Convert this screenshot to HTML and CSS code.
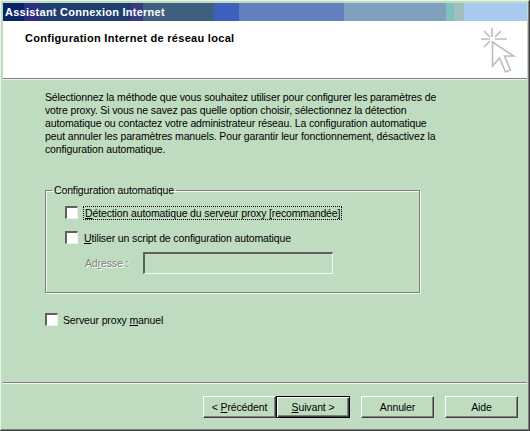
FILE: index.html
```html
<!DOCTYPE html>
<html lang="fr">
  <head>
    <meta charset="UTF-8" />
    <title>Assistant Connexion Internet</title>
    <link rel="stylesheet" href="styles.css">
  </head>
  <body>
    <div class="window">
      <div class="titlebar">Assistant Connexion Internet</div>
      <div class="header">
        <h1>Configuration Internet de réseau local</h1>
        <svg class="wizard-icon" width="36" height="50" viewBox="0 0 36 50">
          <g fill="none" stroke="#bdbdbd" stroke-width="1.6">
            <path d="M11 1v9M0 12h9M14 12h12M3 4l6 6M20 4l-6 6M3 20l6-6" />
            <path d="M11.5 15v24l7-8 6 14 5-2-6-14h9z" fill="#fff" />
          </g>
        </svg>
      </div>
      <div class="content">
        <p class="intro">Sélectionnez la méthode que vous souhaitez utiliser pour configurer les paramètres de votre proxy. Si vous ne savez pas quelle option choisir, sélectionnez la détection automatique ou contactez votre administrateur réseau. La configuration automatique peut annuler les paramètres manuels. Pour garantir leur fonctionnement, désactivez la configuration automatique.</p>

        <fieldset class="group">
          <legend>Configuration automatique</legend>
          <div class="check-row">
            <span class="checkbox"></span>
            <span class="focus-label"><u>D</u>étection automatique du serveur proxy [recommandée]</span>
          </div>
          <div class="check-row">
            <span class="checkbox"></span>
            <span class="plain-label"><u>U</u>tiliser un script de configuration automatique</span>
          </div>
          <div class="address-row">
            <span class="disabled-label">Ad<u>r</u>esse :</span>
            <span class="textbox"></span>
          </div>
        </fieldset>

        <div class="check-row manual-row">
          <span class="checkbox"></span>
          <span class="plain-label">Serveur proxy <u>m</u>anuel</span>
        </div>
      </div>
      <div class="footer">
        <button class="btn">&lt; <u>P</u>récédent</button>
        <button class="btn btn-default"><u>S</u>uivant &gt;</button>
        <button class="btn btn-gap">Annuler</button>
        <button class="btn btn-gap">Aide</button>
      </div>
    </div>
  </body>
</html>
```

FILE: styles.css
```css
/* Global */
html,
body {
  margin: 0;
  padding: 0;
}
body {
  width: 530px;
  height: 431px;
  overflow: hidden;
  font-family: "Liberation Sans", Arial, sans-serif;
  font-size: 10.5px;
  letter-spacing: -0.13px;
  color: #000000;
  background: #c0dcc0;
}
/* Window frame */
.window {
  box-sizing: border-box;
  width: 530px;
  height: 431px;
  padding: 3px 2px 0 3px;
  border-right: 1px solid #404040;
  border-bottom: 1px solid #404040;
  box-shadow: inset 1px 1px 0 #e8f4e8, inset -1px -1px 0 #808080;
  display: flex;
  flex-direction: column;
}
.titlebar {
  flex: none;
  height: 18px;
  line-height: 18px;
  padding-left: 2px;
  font-size: 11px;
  font-weight: bold;
  letter-spacing: 0.25px;
  color: #ffffff;
  white-space: nowrap;
  background: linear-gradient(
    90deg,
    #0a246a 0 21px,
    #2a2f80 21px 38px,
    #1f3e70 38px 128px,
    #3a3a80 128px 140px,
    #3e6080 140px 211px,
    #4060c0 211px 236px,
    #6080c0 236px 341px,
    #80a0c0 341px 443px,
    #80c0c0 443px 451px,
    #a0c0c0 451px 461px,
    #a6caf0 461px
  );
}
/* Header */
.header {
  flex: none;
  box-sizing: border-box;
  height: 58px;
  padding: 6px 10px 0 22px;
  background: #ffffff;
  border-bottom: 1px solid #808080;
  box-shadow: 0 1px 0 #e8f4e8;
  display: flex;
  justify-content: space-between;
  align-items: flex-start;
}
.header h1 {
  margin: 5px 0 0;
  font-size: 11px;
  font-weight: bold;
  letter-spacing: 0.3px;
}
.wizard-icon {
  flex: none;
}
/* Content */
.content {
  flex: 1;
  padding: 12px 0 0 42px;
}
.intro {
  margin: 0;
  width: 400px;
  line-height: 13px;
}
.group {
  box-sizing: border-box;
  width: 375px;
  height: 109px;
  margin: 28px 0 0;
  padding: 9px 0 0 19px;
  border: 1px solid #808080;
  box-shadow: 1px 1px 0 #f0f8f0, inset 1px 1px 0 #f0f8f0;
}
.group legend {
  margin-left: -13px;
  padding: 0 2px 0 2px;
  line-height: 13px;
}
.check-row {
  display: flex;
  align-items: center;
  gap: 6px;
  height: 13px;
  margin-bottom: 12px;
}
.manual-row {
  margin: 20px 0 0;
  gap: 5px;
}
.checkbox {
  flex: none;
  box-sizing: border-box;
  width: 13px;
  height: 13px;
  background: #ffffff;
  border-top: 2px solid #606060;
  border-left: 2px solid #606060;
  border-right: 1px solid #e8f4e8;
  border-bottom: 1px solid #e8f4e8;
}
.focus-label {
  padding: 0 1px;
  outline: 1px dotted #000000;
  white-space: nowrap;
}
.plain-label {
  white-space: nowrap;
}
.address-row {
  display: flex;
  align-items: center;
  margin: -4px 0 0 20px;
}
.disabled-label {
  width: 58px;
  color: #808080;
  text-shadow: 1px 1px 0 #ffffff;
}
.textbox {
  box-sizing: border-box;
  width: 190px;
  height: 22px;
  border-top: 2px solid #606060;
  border-left: 2px solid #606060;
  border-right: 1px solid #f0f8f0;
  border-bottom: 1px solid #f0f8f0;
}
/* Footer */
.footer {
  flex: none;
  box-sizing: border-box;
  height: 48px;
  padding: 13px 9px 0 0;
  border-top: 1px solid #808080;
  box-shadow: inset 0 1px 0 #f0f8f0;
  display: flex;
  justify-content: flex-end;
  align-items: flex-start;
}
.btn {
  box-sizing: border-box;
  width: 73px;
  height: 22px;
  padding: 0;
  font: inherit;
  letter-spacing: inherit;
  color: #000000;
  background: #c0dcc0;
  border: 1px solid;
  border-color: #ffffff #404040 #404040 #ffffff;
  box-shadow: inset -1px -1px 0 #808080;
}
.btn-default {
  width: 74px;
  border: 1px solid #000000;
  box-shadow: inset 1px 1px 0 #ffffff, inset -1px -1px 0 #404040, inset -2px -2px 0 #808080;
}
.btn-gap {
  margin-left: 11px;
}
```
